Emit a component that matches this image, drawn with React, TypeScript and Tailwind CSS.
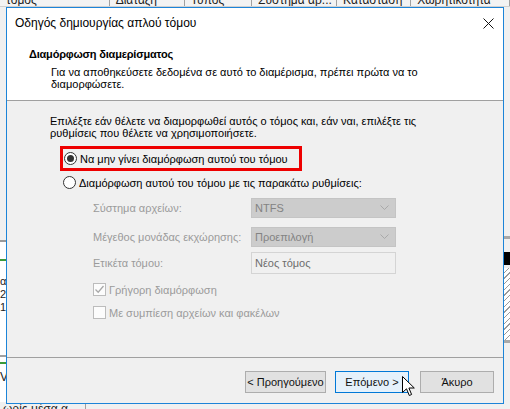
import React from 'react';

const font = { fontFamily: '"Liberation Sans", Arial, sans-serif' };

const Radio: React.FC<{ checked?: boolean }> = ({ checked }) => (
  <span className="flex h-[13px] w-[13px] shrink-0 items-center justify-center rounded-full border border-[#333333] bg-white">
    {checked && <span className="h-[7px] w-[7px] rounded-full bg-[#333333]" />}
  </span>
);

const Check: React.FC<{ checked?: boolean }> = ({ checked }) => (
  <span className="flex h-[13px] w-[13px] shrink-0 items-center justify-center border border-[#bcbcbc] bg-[#fcfcfc]">
    {checked && (
      <svg width="11" height="11" viewBox="0 0 11 11">
        <path d="M1.5 5.5 L4.2 8.2 L9.5 2" fill="none" stroke="#a8a8a8" strokeWidth="1.3" />
      </svg>
    )}
  </span>
);

const Combo: React.FC<{ value: string }> = ({ value }) => (
  <div className="flex h-[20px] w-[145px] items-center justify-between border border-[#c4c4c4] bg-[#cccccc] pl-[3px] pr-[6px] text-[#838383]">
    <span>{value}</span>
    <svg width="9" height="6" viewBox="0 0 9 6">
      <path d="M0.5 0.5 L4.5 4.5 L8.5 0.5" fill="none" stroke="#a9a9a9" strokeWidth="1" />
    </svg>
  </div>
);

const Field: React.FC<{ label: string; children: React.ReactNode }> = ({ label, children }) => (
  <div className="flex items-center">
    <span className="w-[158px] text-[#9b9b9b]">{label}</span>
    {children}
  </div>
);

const Button: React.FC<{ label: string; width: string; active?: boolean }> = ({ label, width, active }) => (
  <div
    className={
      active
        ? `flex h-[22px] ${width} items-center justify-center border border-[#0078d7] bg-[#e5f1fb] text-[#111]`
        : `flex h-[22px] ${width} items-center justify-center border border-[#adadad] bg-[#e1e1e1] text-[#111]`
    }
  >
    {label}
  </div>
);

const Background: React.FC = () => (
  <div className="absolute inset-0 bg-[#f0f0f0]">
    {/* list header behind the dialog */}
    <div className="flex h-[7px] items-end overflow-hidden border-b border-[#d0d0d0] bg-[#f3f3f3] text-[12px] leading-[12px] text-[#222]">
      {[
        ['τόμος', 'w-[111px]'],
        ['Διάταξη', 'w-[76px]'],
        ['Τύπος', 'w-[68px]'],
        ['Σύστημα αρ...', 'w-[86px]'],
        ['Κατάσταση', 'w-[75px]'],
        ['Χωρητικότητα', 'w-[100px]'],
      ].map(([t, w]) => (
        <div key={t} className={`${w} h-full overflow-hidden border-r border-[#a0a0a0] pl-[6px]`}>
          <span className="relative top-[-6px]">{t}</span>
        </div>
      ))}
    </div>
    {/* left strip fragments */}
    <div className="absolute left-0 top-[242px] h-[160px] w-[6px] bg-white" />
    <div className="absolute left-0 top-[240px] h-[2px] w-[6px] bg-[#9a9a9a]" />
    <div className="absolute left-0 top-[259px] h-[2px] w-[6px] bg-[#3a9a3a]" />
    <div className="absolute left-0 top-[275px] w-[6px] overflow-hidden text-[11px] leading-[13px] text-[#222]">
      <div>α</div>
      <div>2(</div>
      <div>1a</div>
    </div>
    <div className="absolute left-0 top-[355px] h-[2px] w-[6px] bg-[#a0a0a0]" />
    <div className="absolute left-0 top-[362px] h-[2px] w-[6px] bg-[#3a9a3a]" />
    <div className="absolute left-0 top-[370px] w-[6px] overflow-hidden text-[12px] leading-[14px] text-[#222]">V</div>
    <div className="absolute left-[3px] top-[403px] text-[12px] leading-[12px] text-[#222]">ωρίς μέσα α...</div>
    <div className="absolute left-[85px] top-[403px] h-[6px] w-px bg-[#a0a0a0]" />
    {/* right strip fragments */}
    <div className="absolute right-0 top-[236px] h-[3px] w-[6px] bg-[#a8a8a8]" />
    <div className="absolute right-0 top-[252px] h-[13px] w-[6px] bg-black" />
    <div className="absolute right-0 top-[268px] h-[72px] w-[6px] bg-[repeating-linear-gradient(135deg,#ffffff_0px,#ffffff_3px,#9a9a9a_3px,#9a9a9a_4px)]" />
    <div className="absolute right-0 top-[340px] h-[3px] w-[6px] bg-[#a8a8a8]" />
  </div>
);

export default function App() {
  return (
    <div className="relative h-[409px] w-[510px] overflow-hidden text-[11px] leading-[12px]" style={font}>
      <Background />

      {/* wizard window */}
      <div className="absolute left-[6px] top-[7px] flex h-[397px] w-[498px] flex-col border border-[#1c84d8] bg-[#f0f0f0]">
        {/* title bar + header */}
        <div className="bg-white">
          <div className="flex h-[30px] items-center justify-between pl-[8px] pr-[9px]">
            <span className="text-[12px] text-black">Οδηγός δημιουργίας απλού τόμου</span>
            <svg width="11" height="11" viewBox="0 0 11 11">
              <path d="M0.5 0.5 L10.5 10.5 M10.5 0.5 L0.5 10.5" stroke="#111" strokeWidth="1" />
            </svg>
          </div>
          <div className="h-[62px] pl-[22px] pt-[10px]">
            <div className="text-[11px] font-bold tracking-[-0.2px] text-black">Διαμόρφωση διαμερίσματος</div>
            <div className="mt-[6px] pl-[22px] text-black">
              <div>Για να αποθηκεύσετε δεδομένα σε αυτό το διαμέρισμα, πρέπει πρώτα να το</div>
              <div>διαμορφώσετε.</div>
            </div>
          </div>
        </div>
        <div className="h-px bg-[#a0a0a0]" />

        {/* body */}
        <div className="flex flex-1 flex-col pl-[43px] pt-[14px] text-black">
          <div>
            <div>Επιλέξτε εάν θέλετε να διαμορφωθεί αυτός ο τόμος και, εάν ναι, επιλέξτε τις</div>
            <div>ρυθμίσεις που θέλετε να χρησιμοποιήσετε.</div>
          </div>

          <div className="ml-[10px] mt-[7px] flex h-[25px] w-[242px] items-center gap-[3px] border-[3px] border-[#ee0000] pl-[1px]">
            <Radio checked />
            <span>Να μην γίνει διαμόρφωση αυτού του τόμου</span>
          </div>
          <div className="ml-[13px] mt-[5px] flex items-center gap-[3px]">
            <Radio />
            <span>Διαμόρφωση αυτού του τόμου με τις παρακάτω ρυθμίσεις:</span>
          </div>

          <div className="ml-[43px] mt-[9px] flex flex-col">
            <Field label="Σύστημα αρχείων:">
              <Combo value="NTFS" />
            </Field>
            <div className="mt-[9px]">
              <Field label="Μέγεθος μονάδας εκχώρησης:">
                <Combo value="Προεπιλογή" />
              </Field>
            </div>
            <div className="mt-[5px]">
              <Field label="Ετικέτα τόμου:">
                <div className="flex h-[22px] w-[145px] items-center border border-[#d4d4d4] bg-[#f0f0f0] pl-[3px] text-[#6d6d6d]">
                  Νέος τόμος
                </div>
              </Field>
            </div>
            <div className="mt-[9px] flex items-center gap-[3px] text-[#9b9b9b]">
              <Check checked />
              <span>Γρήγορη διαμόρφωση</span>
            </div>
            <div className="mt-[10px] flex items-center gap-[3px] text-[#9b9b9b]">
              <Check />
              <span>Με συμπίεση αρχείων και φακέλων</span>
            </div>
          </div>
        </div>

        <div className="h-px bg-[#a0a0a0]" />
        {/* footer buttons */}
        <div className="flex h-[45px] items-start justify-end gap-[9px] pr-[9px] pt-[13px]">
          <Button label="< Προηγούμενο" width="w-[81px]" />
          <Button label="Επόμενο >" width="w-[74px]" active />
          <div className="ml-[2px]">
            <Button label="Άκυρο" width="w-[74px]" />
          </div>
        </div>
      </div>

      {/* mouse pointer */}
      <svg className="absolute left-[402px] top-[376px]" width="14" height="22" viewBox="0 0 14 22">
        <path
          d="M0.5 0.5 L0.5 16.5 L4.5 12.8 L7.3 19.5 L9.6 18.5 L6.9 12 L12.3 12 Z"
          fill="#ffffff"
          stroke="#000000"
          strokeWidth="1"
          strokeLinejoin="miter"
        />
      </svg>
    </div>
  );
}
